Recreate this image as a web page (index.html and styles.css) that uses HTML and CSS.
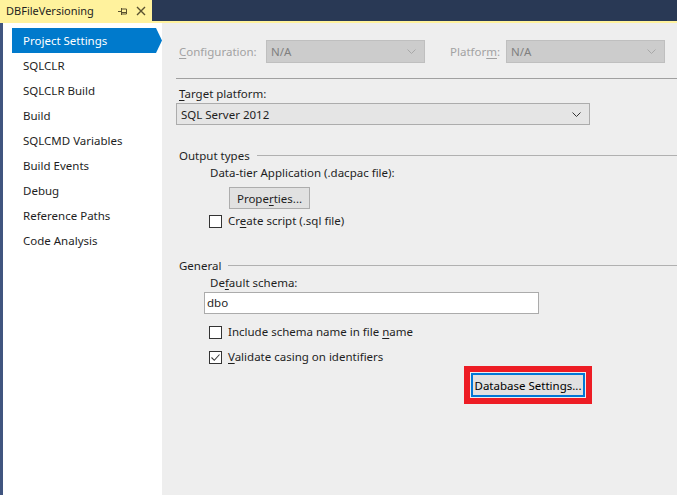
FILE: index.html
```html
<!DOCTYPE html>
<html>
<head>
<meta charset="utf-8">
<link rel="stylesheet" href="styles.css">
</head>
<body>
<div class="window">
  <div class="titlebar">
    <div class="tab">
      <span class="tab-title">DBFileVersioning</span>
      <svg class="tab-icon pin" width="10" height="10" viewBox="0 0 10 10">
        <path d="M0 5.5H3M3.5 2V9M3.5 3H8.5V8H3.5M3.5 6.5H8.5" fill="none" stroke="#5a5230" stroke-width="1"/>
      </svg>
      <svg class="tab-icon close" width="10" height="10" viewBox="0 0 10 10">
        <path d="M1 1L9 9M9 1L1 9" fill="none" stroke="#5a5230" stroke-width="1.4"/>
      </svg>
    </div>
  </div>
  <div class="accent"></div>
  <div class="main">
    <nav class="sidebar">
      <div class="nav-item selected">Project Settings</div>
      <div class="nav-item">SQLCLR</div>
      <div class="nav-item">SQLCLR Build</div>
      <div class="nav-item">Build</div>
      <div class="nav-item">SQLCMD Variables</div>
      <div class="nav-item">Build Events</div>
      <div class="nav-item">Debug</div>
      <div class="nav-item">Reference Paths</div>
      <div class="nav-item">Code Analysis</div>
    </nav>
    <section class="content">
      <div class="config-row">
        <span class="dis-label lbl-config"><u>C</u>onfiguration:</span>
        <div class="combo disabled w-config"><span>N/A</span>
          <svg width="9" height="5" viewBox="0 0 9 5"><path d="M0.5 0.5L4.5 4.5L8.5 0.5" fill="none" stroke="#a8a8a8"/></svg>
        </div>
        <span class="dis-label lbl-platform">Platfor<u>m</u>:</span>
        <div class="combo disabled w-platform"><span>N/A</span>
          <svg width="9" height="5" viewBox="0 0 9 5"><path d="M0.5 0.5L4.5 4.5L8.5 0.5" fill="none" stroke="#a8a8a8"/></svg>
        </div>
      </div>
      <div class="separator"></div>
      <div class="label target-label"><u>T</u>arget platform:</div>
      <div class="combo target"><span>SQL Server 2012</span>
        <svg width="9" height="5" viewBox="0 0 9 5"><path d="M0.5 0.5L4.5 4.5L8.5 0.5" fill="none" stroke="#333"/></svg>
      </div>

      <div class="group-header output-header"><span>Output types</span><div class="group-line"></div></div>
      <div class="label indent dacpac-label">Data-tier Application (.dacpac file):</div>
      <div class="btn-row props-row"><button class="btn props">Prope<u>r</u>ties...</button></div>
      <div class="check-row create-row"><span class="checkbox"></span><span>Cr<u>e</u>ate script (.sql file)</span></div>

      <div class="group-header general-header"><span>General</span><div class="group-line"></div></div>
      <div class="label indent schema-label">De<u>f</u>ault schema:</div>
      <div class="input-row"><div class="textbox">dbo</div></div>
      <div class="check-row include-row"><span class="checkbox"></span><span>Include schema name in file <u>n</u>ame</span></div>
      <div class="check-row validate-row"><span class="checkbox checked">
        <svg width="11" height="11" viewBox="0 0 11 11"><path d="M1.5 5.5L4.3 8.3L9.5 2.5" fill="none" stroke="#3c3c3c" stroke-width="1.1"/></svg>
      </span><span><u>V</u>alidate casing on identifiers</span></div>
      <div class="db-row">
        <div class="highlight"><button class="btn db">Database Settings...</button></div>
      </div>
    </section>
  </div>
</div>
</body>
</html>
```
FILE: styles.css
```css
* { box-sizing: border-box; }
html, body { margin: 0; padding: 0; }
body {
  width: 677px;
  height: 495px;
  overflow: hidden;
  font-family: "Noto Sans", "Open Sans", sans-serif;
  font-size: 11.5px;
  color: #1e1e1e;
  background: #eeeeee;
}
u { text-decoration: underline; text-underline-offset: 2px; }
.window { display: flex; flex-direction: column; height: 495px; }

.titlebar {
  height: 21px;
  background: #293955;
  display: flex;
  flex: none;
}
.tab {
  width: 152px;
  background: #fff29d;
  display: flex;
  align-items: center;
  padding-left: 6px;
  padding-right: 6px;
  color: #1e1e1e;
  font-size: 11px;
}
.tab-title { flex: 1; white-space: nowrap; }
.tab-icon { flex: none; }
.pin { margin-top: 1px; }
.close { margin-left: 8px; margin-top: 1px; }
.accent { height: 2px; background: #fff29d; flex: none; }

.main { flex: 1; display: flex; min-height: 0; }
.sidebar {
  width: 162px;
  flex: none;
  background: #ffffff;
  border-left: 3px solid #40557f;
  padding-top: 5px;
  padding-left: 9px;
}
.nav-item {
  height: 25px;
  line-height: 25px;
  padding-left: 11px;
  white-space: nowrap;
}
.nav-item.selected {
  background: #007acc;
  color: #ffffff;
  width: 150px;
  clip-path: polygon(0 0, 144px 0, 150px 50%, 144px 100%, 0 100%);
}

.content {
  flex: 1;
  padding-left: 14px;
  display: flex;
  flex-direction: column;
}

.config-row {
  margin-top: 17px;
  height: 23px;
  display: flex;
  align-items: center;
}
.dis-label { color: #a2a2a2; padding-left: 3px; }
.lbl-config { width: 90px; }
.lbl-platform { margin-left: 22px; width: 59px; }
.combo {
  height: 23px;
  display: flex;
  align-items: center;
  justify-content: space-between;
  padding: 0 8px 0 4px;
  border: 1px solid #bfbfbf;
}
.combo.disabled { background: #cccccc; color: #7f7f7f; }
.w-config { width: 159px; }
.w-platform { width: 159px; }

.separator {
  margin-top: 15px;
  height: 1px;
  background: #a0a0a0;
}
.label { height: 16px; line-height: 16px; padding-left: 3px; }
.target-label { margin-top: 7px; }
.combo.target {
  margin-top: 1px;
  width: 414px;
  height: 22px;
  background: #e5e5e5;
  border-color: #acacac;
}

.group-header {
  height: 16px;
  display: flex;
  align-items: center;
  padding-left: 3px;
}
.group-header span { flex: none; }
.group-line { flex: 1; height: 1px; background: #b0b0b0; margin-left: 7px; }
.output-header { margin-top: 22px; }
.indent { padding-left: 34px; }
.dacpac-label { margin-top: 2px; }

.btn-row { display: flex; }
.props-row { margin-top: 6px; padding-left: 53px; }
.btn {
  font-family: inherit;
  font-size: inherit;
  color: #1e1e1e;
  background: #e1e1e1;
  border: 1px solid #adadad;
  padding: 0;
  margin: 0;
}
.props { width: 81px; height: 22px; }

.check-row {
  display: flex;
  align-items: center;
  height: 13px;
  padding-left: 33px;
  line-height: 13px;
}
.check-row > span:last-child { margin-top: -2px; }
.checkbox {
  width: 13px;
  height: 13px;
  border: 1px solid #333333;
  background: #ffffff;
  margin-right: 6px;
  flex: none;
  display: flex;
  align-items: center;
  justify-content: center;
}
.check-row > .checkbox { margin-top: 0; }
.create-row { margin-top: 6px; }
.general-header { margin-top: 29px; }
.schema-label { margin-top: 2px; }
.input-row { margin-top: 1px; padding-left: 28px; }
.textbox {
  width: 335px;
  height: 22px;
  background: #ffffff;
  border: 1px solid #ababab;
  line-height: 20px;
  padding-left: 2px;
}
.include-row { margin-top: 12px; }
.validate-row { margin-top: 12px; }

.db-row { margin-top: 2px; padding-left: 288px; display: flex; }
.highlight {
  width: 128px;
  height: 38px;
  border: 6px solid #ed1c24;
  padding: 1px;
}
.btn.db {
  width: 114px;
  height: 24px;
  border: 2px solid #0078d7;
  background: #e1e1e1;
  color: #000;
}
```
